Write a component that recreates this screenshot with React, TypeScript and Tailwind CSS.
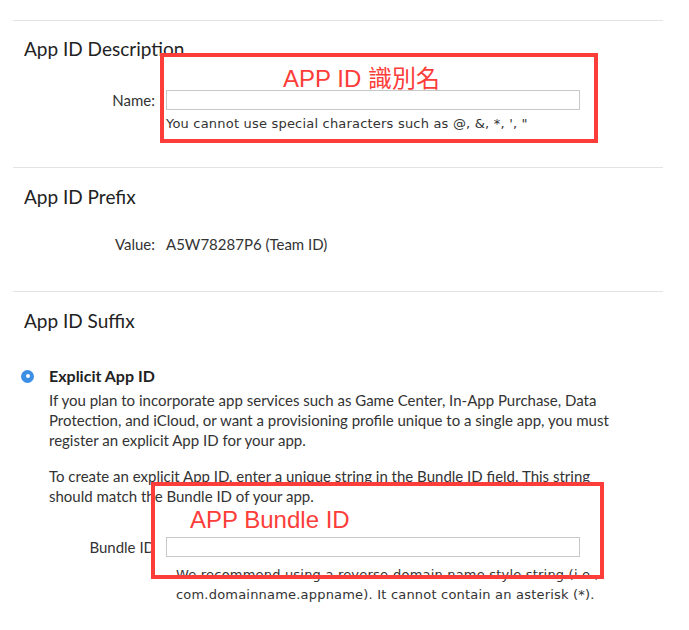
const body = { fontFamily: "Lato, 'Open Sans', sans-serif" };
const hint = { fontFamily: "'DejaVu Sans', 'Noto Sans', sans-serif" };
const note = { fontFamily: "'Liberation Sans', 'Noto Sans CJK TC', sans-serif" };

function Rule() {
  return <div className="mx-[13px] w-[650px] border-t border-[#e3e3e3]" />;
}

function Heading({ children }: { children: React.ReactNode }) {
  return (
    <h2 className="pl-[24px] text-[19px] leading-[24px] text-[#222]" style={body}>
      {children}
    </h2>
  );
}

function Field({ label }: { label: string }) {
  return (
    <div className="flex items-center">
      <span className="w-[155px] text-right text-[15px] leading-[20px] text-[#333]" style={body}>
        {label}
      </span>
      <div className="ml-[11px] h-[20px] w-[414px] border border-[#c8c8c8] bg-white" />
    </div>
  );
}

export default function App() {
  return (
    <div className="relative h-[630px] w-[689px] overflow-hidden bg-white text-[#333]">
      <div className="pt-[20px]">
        <Rule />
        <div className="pt-[16px] pb-[35px]">
          <Heading>App ID Description</Heading>
          <div className="mt-[29px]">
            <Field label="Name:" />
          </div>
          <p className="ml-[166px] mt-[6px] text-[13px] leading-[16px] tracking-[0.2px] text-[#333]" style={hint}>
            You cannot use special characters such as @, &amp;, *, ', "
          </p>
        </div>
        <Rule />
        <div className="pt-[17px] pb-[37px]">
          <Heading>App ID Prefix</Heading>
          <div className="mt-[25px] flex text-[15px] leading-[20px]" style={body}>
            <span className="w-[155px] text-right">Value:</span>
            <span className="ml-[11px]">A5W78287P6 (Team ID)</span>
          </div>
        </div>
        <Rule />
        <div className="pt-[17px]">
          <Heading>App ID Suffix</Heading>
          <div className="mt-[33px] flex items-center pl-[21px]">
            <span className="flex h-[13px] w-[13px] items-center justify-center rounded-full bg-[#3d8fe6]">
              <span className="h-[4px] w-[4px] rounded-full bg-white" />
            </span>
            <span className="ml-[15px] text-[16px] font-bold leading-[20px] text-[#222]" style={body}>
              Explicit App ID
            </span>
          </div>
          <div className="mt-[4px] pl-[49px] text-[15px] leading-[20px] text-[#333] whitespace-nowrap" style={body}>
            <p>
              If you plan to incorporate app services such as Game Center, In-App Purchase, Data
              <br />
              Protection, and iCloud, or want a provisioning profile unique to a single app, you must
              <br />
              register an explicit App ID for your app.
            </p>
            <p className="mt-[16px]">
              To create an explicit App ID, enter a unique string in the Bundle ID field. This string
              <br />
              should match the Bundle ID of your app.
            </p>
          </div>
          <div className="mt-[31px]">
            <Field label="Bundle ID" />
          </div>
          <p className="ml-[176px] mt-[8px] text-[13px] leading-[20px] tracking-[0.2px] text-[#333]" style={hint}>
            We recommend using a reverse-domain name style string (i.e.,
            <br />
            com.domainname.appname). It cannot contain an asterisk (*).
          </p>
        </div>
      </div>

      {/* annotation boxes */}
      <div className="absolute left-[160px] top-[53px] h-[90px] w-[438px] border-[4px] border-[#fc3d39]">
        <span className="absolute left-[119px] top-[8px] text-[24px] leading-[28px] text-[#fc3d39]" style={note}>
          APP ID 識別名
        </span>
      </div>
      <div className="absolute left-[151px] top-[482px] h-[97px] w-[453px] border-[4px] border-[#fc3d39]">
        <span className="absolute left-[35px] top-[20px] text-[24px] leading-[28px] text-[#fc3d39]" style={note}>
          APP Bundle ID
        </span>
      </div>
    </div>
  );
}
